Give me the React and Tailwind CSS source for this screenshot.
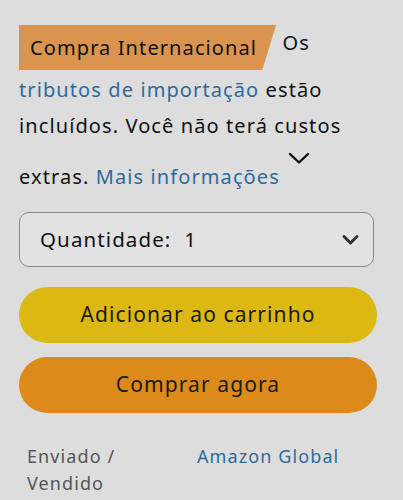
import React from "react";

function Chevron({ className }) {
  return (
    <svg viewBox="0 0 22 13" className={className} fill="none">
      <path
        d="M2 2 L11 10.5 L20 2"
        stroke="currentColor"
        strokeWidth="2.4"
        strokeLinecap="round"
        strokeLinejoin="round"
      />
    </svg>
  );
}

export default function App() {
  return (
    <div className="w-[403px] min-h-[500px] bg-[#dddddd] px-[19px] pt-[25px] font-['Noto_Sans',sans-serif] text-[#111111] tracking-[1.1px]">
      {/* Import notice */}
      <p className="text-[20px] leading-[36px]">
        <span className="inline-block h-[45px] leading-[45px] mb-[2px] bg-[#d9944f] pl-[11px] pr-[19px] align-[-5px] [clip-path:polygon(0_0,100%_0,94.6%_100%,0_100%)]">
          Compra Internacional
        </span>{" "}
        Os{" "}
        <a className="text-[#2d6a9c]">tributos de importação</a> estão
        incluídos. Você não terá custos extras.{" "}
        <a className="text-[#2d6a9c]">Mais informações</a>
        <Chevron className="inline-block w-[22px] h-[13px] ml-[8px] mt-[8px] mb-[19px] align-baseline text-[#111]" />
      </p>

      {/* Quantity */}
      <button className="mt-[17px] w-[355px] h-[55px] flex items-center justify-between rounded-[10px] border border-[#8a8a8a] bg-[#e2e2e2] pl-[20px] pr-[13px] text-[20.5px] text-[#111]">
        <span>Quantidade:&nbsp; 1</span>
        <svg viewBox="0 0 18 12" className="w-[19px] h-[12px] text-[#333]" fill="none">
          <path
            d="M2.5 2.5 L9 9 L15.5 2.5"
            stroke="currentColor"
            strokeWidth="3"
            strokeLinecap="round"
            strokeLinejoin="round"
          />
        </svg>
      </button>

      <button className="mt-[20px] w-[358px] h-[56px] rounded-full bg-[#dbb812] text-[21px] text-[#1a1a1a]">
        Adicionar ao carrinho
      </button>
      <button className="mt-[14px] w-[358px] h-[56px] rounded-full bg-[#dc8a1a] text-[21px] text-[#1a1a1a]">
        Comprar agora
      </button>

      {/* Seller */}
      <div className="mt-[30px] grid grid-cols-[178px_1fr] text-[18px] leading-[27px]">
        <div className="pl-[8px] pr-[60px] text-[#555555]">Enviado / Vendido</div>
        <div className="text-[#2d6a9c]">Amazon Global</div>
      </div>
    </div>
  );
}
